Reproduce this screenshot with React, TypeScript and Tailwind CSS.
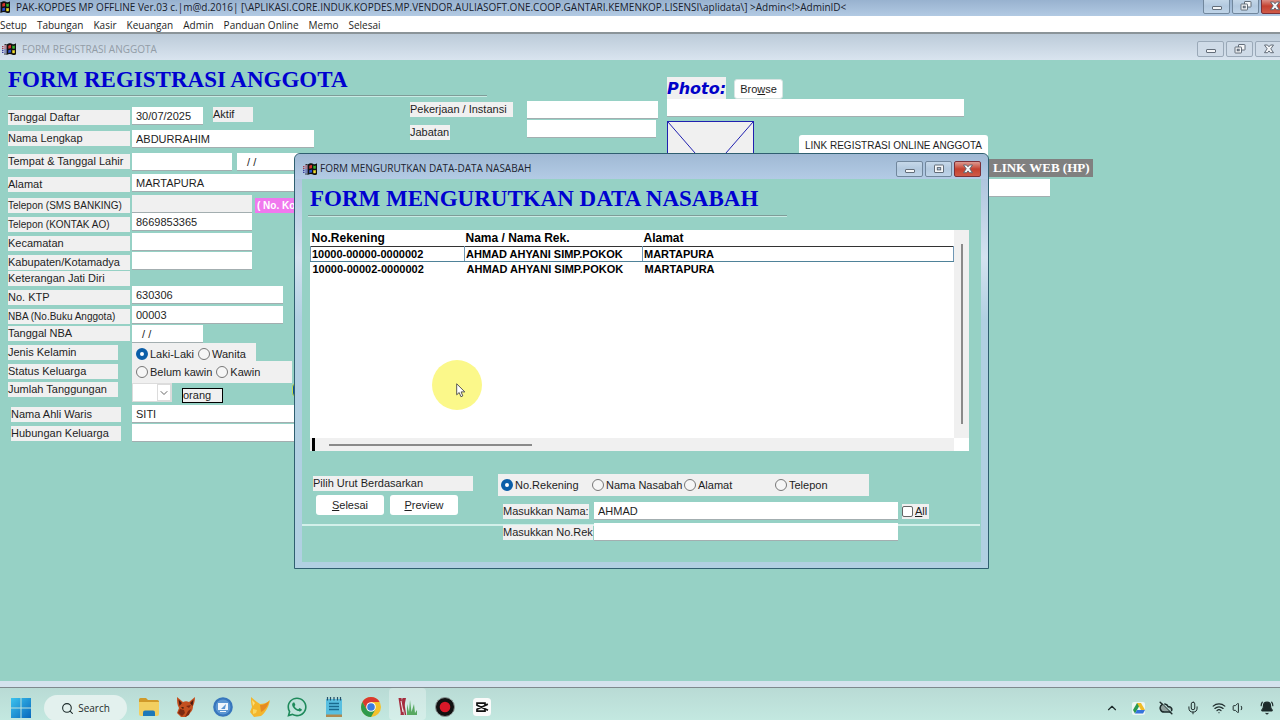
import type { ReactNode } from "react";
import {
  BellRing,
  ChevronDown,
  ChevronUp,
  CloudOff,
  Mic,
  Search,
  Volume1,
  Wifi,
} from "lucide-react";
import { FaWhatsapp } from "react-icons/fa";

const menus = ["Setup", "Tabungan", "Kasir", "Keuangan", "Admin", "Panduan Online", "Memo", "Selesai"];

const formLabels = [
  { id: "tanggal-daftar", text: "Tanggal Daftar", className: "mt-[9px] w-[122px] text-[11px]" },
  { id: "nama-lengkap", text: "Nama Lengkap", className: "mt-1.5 w-[122px] text-[11px]" },
  { id: "tempat-lahir", text: "Tempat & Tanggal Lahir", className: "mt-2 w-[122px] text-[11px]" },
  { id: "alamat", text: "Alamat", className: "mt-2 w-[122px] text-[11px]" },
  { id: "telepon-sms", text: "Telepon (SMS BANKING)", className: "mt-1.5 w-[122px] text-[10px]" },
  { id: "telepon-ao", text: "Telepon (KONTAK AO)", className: "mt-1 w-[122px] text-[10px]" },
  { id: "kecamatan", text: "Kecamatan", className: "mt-1 w-[122px] text-[11px]" },
  { id: "kabupaten", text: "Kabupaten/Kotamadya", className: "mt-1 w-[122px] text-[11px]" },
  { id: "no-ktp", text: "Keterangan Jati Diri", className: "mt-px w-[122px] text-[11px]" },
  { id: "no-ktp", text: "No. KTP", className: "mt-1 w-[122px] text-[11px]" },
  { id: "nba", text: "NBA (No.Buku Anggota)", className: "mt-1 w-[122px] text-[10px]" },
  { id: "tanggal-nba", text: "Tanggal NBA", className: "mt-0.5 w-[122px] text-[11px]" },
  { id: "laki", text: "Jenis Kelamin", className: "mt-1 w-[110px] text-[11px]" },
  { id: "belum-kawin", text: "Status Keluarga", className: "mt-1 w-[110px] text-[11px]" },
  { id: "tanggungan", text: "Jumlah Tanggungan", className: "mt-[3px] w-[110px] text-[11px]" },
  { id: "ahli-waris", text: "Nama Ahli Waris", className: "ml-[3px] mt-2.5 w-[110px] text-[11px]" },
  { id: "hubungan", text: "Hubungan Keluarga", className: "ml-[3px] mt-1 w-[110px] text-[11px]" },
];

const rows = [
  ["10000-00000-0000002", "AHMAD AHYANI SIMP.POKOK", "MARTAPURA"],
  ["10000-00002-0000002", "AHMAD AHYANI SIMP.POKOK", "MARTAPURA"],
];

function FlagIcon() {
  return (
    <svg viewBox="0 0 14 12" className="h-3 w-3.5 shrink-0" aria-hidden="true">
      <path d="M4.500 1.500C7 0 9 0 10 .8S12.500 1.500 14 .3V11.300c-1.500 1-3 1-4 .3S7 10.700 4.500 12Z" fill="#111" />
      <path d="M6.300 2.800C7.500 2 8.300 1.900 9 2.300V5.300C8.300 5 7.300 5.200 6.300 5.800Z" fill="#d6322c" />
      <path d="M10.300 2.500c.8.5 1.600.5 2.500.1v2.900c-.9.4-1.700.4-2.500 0Z" fill="#35b52b" />
      <path d="M6.300 7.300c1-.7 2-.8 2.700-.5v2.900C8.300 9.400 7.300 9.600 6.300 10.200Z" fill="#2a4fd4" />
      <path d="M10.300 7c.8.4 1.600.4 2.500 0v2.900c-.9.4-1.700.4-2.500 0Z" fill="#f0dc2c" />
      <path d="M0 3.500h1.500M2.200 3h2.300M0 5.300h1.500M2.200 5h2.300" stroke="#a83a4a" strokeWidth="1.200" />
      <path d="M0 7.300h1.500M2.200 7h2.300M0 9.300h1.500M2.200 9h2.300" stroke="#3b3f9a" strokeWidth="1.200" />
      <path d="M2 11h2.500M2.500 1.500h2" stroke="#222" strokeWidth=".9" />
    </svg>
  );
}

type Glyph = "min" | "restore" | "max" | "close";

function WindowButton({ glyph, tone }: { glyph: Glyph; tone: "active" | "dim" | "close" }) {
  const tones = {
    active: "border-[#71879d] bg-linear-to-b from-[#c6d8e9] via-[#b3c9df] to-[#bfd4e8]",
    dim: "border-[#9aa9b8] bg-[#cfdbe7]",
    close: "border-[#7c3038] bg-linear-to-b from-[#dc9a92] via-[#c4402f] to-[#cf5a48]",
  };
  return (
    <button
      type="button"
      aria-label={glyph}
      className={"flex h-4 w-[27px] items-center justify-center rounded-[2px] border " + tones[tone]}
    >
      <svg viewBox="0 0 12 10" className="h-2.5 w-3" fill="#f4f6f8" stroke="#56606c" strokeWidth=".9">
        {glyph === "min" && <rect x="1.500" y="5.500" width="9" height="3" rx=".5" />}
        {glyph === "max" && (
          <>
            <rect x="1.500" y="1" width="9" height="7.500" rx=".5" />
            <rect x="4.300" y="3.600" width="3.400" height="2.300" fill="#b3c9df" />
          </>
        )}
        {glyph === "restore" && (
          <>
            <rect x="4.500" y=".5" width="6.500" height="5.500" rx=".5" />
            <rect x="1" y="3" width="6.500" height="6" rx=".5" />
            <rect x="3.200" y="5.200" width="2" height="1.600" fill="#b3c9df" />
          </>
        )}
        {glyph === "close" && (
          <path d="M1.500 1h3L6 2.800 7.500 1h3L7.800 4.800 10.500 8.700h-3L6 6.900 4.500 8.700h-3l2.700-3.900Z" />
        )}
      </svg>
    </button>
  );
}

function Field({ id, label, value, className }: { id?: string; label?: string; value?: string; className: string }) {
  return (
    <input
      id={id}
      type="text"
      aria-label={label}
      defaultValue={value}
      className={"block h-[18px] border-b border-[#a3aeb0] px-1 text-[11px] leading-[17px] outline-none " + className}
    />
  );
}

function Radio({ id, name, label, checked }: { id: string; name: string; label: string; checked?: boolean }) {
  return (
    <span className="flex items-center gap-0.5">
      <input
        id={id}
        type="radio"
        name={name}
        defaultChecked={checked}
        className="size-3 shrink-0 appearance-none rounded-full border border-[#777] bg-[#f6f6f6] checked:border-4 checked:border-[#0b5ea8] checked:bg-white"
      />
      <label htmlFor={id} className="whitespace-nowrap">{label}</label>
    </span>
  );
}

function Rule({ className }: { className: string }) {
  return <div className={"h-0.5 border-t border-b border-t-[#7f9c98] border-b-[#c9ebe4] " + className} />;
}

function MemberForm() {
  return (
    <div className="grid grid-cols-[402px_257px_1fr] grid-rows-[41px_auto] pl-2">
      <div className="col-span-2 pt-2">
        <h1 className="font-['Liberation_Serif',serif] text-[23px] leading-6 font-bold text-[#0000d0]">FORM REGISTRASI ANGGOTA</h1>
        <Rule className="mt-[3px] w-[479px]" />
      </div>

      <div className="col-start-1 row-start-2 flex">
        <div className="w-[124px]">
          {formLabels.map((l) => (
            <label
              key={l.text}
              htmlFor={l.id}
              className={"block h-[15px] bg-[#f0f0f0] leading-[15px] whitespace-nowrap " + l.className}
            >
              {l.text}
            </label>
          ))}
        </div>
        <div className="mt-1.5">
          <div className="flex items-start gap-[10px]">
            <Field id="tanggal-daftar" value="30/07/2025" className="w-[71px] bg-white" />
            <span className="h-[15px] w-10 bg-[#f0f0f0] leading-[15px]">Aktif</span>
          </div>
          <Field id="nama-lengkap" value="ABDURRAHIM" className="mt-[5px] w-[182px] bg-white" />
          <div className="mt-[5px] flex gap-[5px]">
            <Field id="tempat-lahir" className="w-[100px] bg-white" />
            <Field label="Tanggal Lahir" value="  / /" className="w-[100px] bg-white" />
          </div>
          <Field id="alamat" value="MARTAPURA" className="mt-[3px] w-[270px] bg-white" />
          <div className="mt-[3px] flex items-end gap-[3px]">
            <Field id="telepon-sms" className="w-[120px] bg-[#f0f0f0]" />
            <span className="h-[15px] bg-[#f078ee] px-0.5 text-[10px] leading-[15px] font-bold whitespace-nowrap text-white">( No. Kon</span>
          </div>
          <Field id="telepon-ao" value="8669853365" className="w-[120px] bg-white" />
          <Field id="kecamatan" className="mt-[2px] w-[120px] bg-white" />
          <Field id="kabupaten" className="mt-px w-[120px] bg-white" />
          <Field id="no-ktp" value="630306" className="mt-4 w-[151px] bg-white" />
          <Field id="nba" value="00003" className="mt-[2px] w-[151px] bg-white" />
          <Field id="tanggal-nba" value="  / /" className="mt-px w-[71px] bg-white" />
          <div className="flex h-[18px] w-[124px] items-center gap-1 bg-[#f0f0f0] pt-1 pl-1">
            <Radio id="laki" name="kelamin" label="Laki-Laki" checked />
            <Radio id="wanita" name="kelamin" label="Wanita" />
          </div>
          <div className="flex h-[22px] w-40 items-center gap-1 bg-[#f0f0f0] pl-1">
            <Radio id="belum-kawin" name="status" label="Belum kawin" />
            <Radio id="kawin" name="status" label="Kawin" />
          </div>
          <div className="flex h-[22px] items-start">
            <div className="relative">
              <select id="tanggungan" className="block h-[19px] w-10 appearance-none border border-[#dcdcdc] bg-white">
                <option> </option>
              </select>
              <span className="pointer-events-none absolute top-px right-px flex h-[17px] w-[14px] items-center justify-center border border-[#dcdcdc] bg-white">
                <ChevronDown className="size-3 text-[#666]" />
              </span>
            </div>
            <span className="mt-[5px] ml-2.5 h-[15px] w-[41px] border border-black bg-[#f0f0f0] leading-[13px]">orang</span>
            <button type="button" aria-label="Cari" className="ml-[69px] h-3.5 w-4 rounded-sm border border-[#c8e04a] bg-[#0b4f9c]" />
          </div>
          <Field id="ahli-waris" value="SITI" className="w-[270px] bg-white" />
          <Field id="hubungan" className="mt-px w-[270px] bg-white" />
        </div>
      </div>

      <div className="row-start-2 flex gap-3.5">
        <div>
          <label htmlFor="pekerjaan" className="mt-px block h-[15px] w-[103px] bg-[#f0f0f0] leading-[15px]">Pekerjaan / Instansi</label>
          <label htmlFor="jabatan" className="mt-2 block h-[15px] w-10 bg-[#f0f0f0] leading-[15px]">Jabatan</label>
        </div>
        <div>
          <Field id="pekerjaan" className="w-[131px] bg-white" />
          <Field id="jabatan" className="mt-px w-[129px] bg-white" />
        </div>
      </div>

      <div className="col-start-3 row-span-2 row-start-1 pt-[17px]">
        <div className="flex items-end gap-2">
          <label htmlFor="photo" className="h-[22px] w-[59px] bg-[#f0f0f0] font-['DejaVu_Sans',sans-serif] text-base leading-6 font-bold text-[#0000c8] italic">Photo:</label>
          <button type="button" className="h-5 w-[49px] rounded-[3px] border border-[#d8e4e2] bg-white">
            Bro<u>w</u>se
          </button>
        </div>
        <Field id="photo" className="w-[297px] bg-white" />
        <div className="flex">
          <svg viewBox="0 0 87 80" className="mt-1 h-20 w-[87px]" fill="#f0f0f0" stroke="#2020b0">
            <rect x=".5" y=".5" width="86" height="79" />
            <path d="M1 1l68 78M86 1L18 79" />
          </svg>
          <div className="mt-[18px] ml-[45px]">
            <button type="button" className="block h-6 w-[189px] rounded-[3px] bg-white pb-1 text-[10px] whitespace-nowrap">LINK REGISTRASI ONLINE ANGGOTA</button>
            <div className="ml-[189px] h-[18px] w-[105px] bg-[#808080] pl-[5px] font-['Liberation_Serif',serif] text-[13px] leading-[17px] font-bold whitespace-nowrap text-white">LINK WEB (HP)</div>
            <Field label="Link Web" className="mt-[2px] w-[251px] bg-white" />
          </div>
        </div>
      </div>
    </div>
  );
}

function SortDialog() {
  return (
    <div
      role="dialog"
      aria-label="FORM MENGURUTKAN DATA-DATA NASABAH"
      className="absolute top-[93px] left-[294px] w-[695px] rounded-t-md border border-[#2f5f70] bg-linear-to-b from-[#a3bdd8] via-[#d4e2f0] via-25% to-[#b1d0e2] to-40% px-[7px] pb-1.5"
    >
      <div className="-mx-[7px] flex h-[25px] items-center gap-[3px] rounded-t-md bg-linear-to-b from-[#a0b9d4] to-[#b3cbe5] pt-1 pr-[7px] pl-2 font-['Open_Sans',sans-serif] text-[10px] text-[#1c2430]">
        <FlagIcon />
        <span className="flex-1">FORM MENGURUTKAN DATA-DATA NASABAH</span>
        <div className="flex gap-0.5">
          <WindowButton glyph="min" tone="active" />
          <WindowButton glyph="max" tone="active" />
          <WindowButton glyph="close" tone="close" />
        </div>
      </div>

      <div className="relative bg-[#96d1c5] pt-2 pb-[21px]">
        <h2 className="pl-2 font-['Liberation_Serif',serif] text-[23px] leading-6 font-bold text-[#0000d0]">FORM MENGURUTKAN DATA NASABAH</h2>
        <Rule className="mt-1 ml-1.5 w-[479px]" />

        <div className="relative mt-[13px] ml-2 grid w-[659px] grid-cols-[1fr_15px] grid-rows-[208px_13px] bg-white">
          <div>
            <table className="w-full table-fixed border-collapse text-left text-[11px] font-bold text-black">
              <colgroup>
                <col className="w-[154px]" />
                <col className="w-[178px]" />
                <col />
              </colgroup>
              <thead>
                <tr className="h-4 text-[12px] leading-4">
                  <th className="pl-px">No.Rekening</th>
                  <th className="pl-px">Nama / Nama Rek.</th>
                  <th className="pl-px">Alamat</th>
                </tr>
              </thead>
              <tbody>
                {rows.map((row, i) => (
                  <tr key={row[0]} className="h-[15px] leading-[14px]">
                    {row.map((cell) => (
                      <td key={cell} className={i === 0 ? "border border-t-[#333] border-r-[#6f97b5] border-b-[#4f8299] border-l-[#6f97b5] pl-px" : "pl-0.5"}>
                        {cell}
                      </td>
                    ))}
                  </tr>
                ))}
              </tbody>
            </table>
          </div>
          <div className="flex justify-center bg-[#f0f0f0] pt-3.5 pb-3.5">
            <div className="w-0.5 bg-[#8a8a8a]" />
          </div>
          <div className="flex items-center bg-[#f0f0f0]">
            <div className="ml-0.5 h-full w-[3px] bg-black" />
            <div className="ml-3.5 h-0.5 w-[203px] bg-[#8a8a8a]" />
          </div>
          <div className="absolute top-[130px] left-[122px] size-[50px] rounded-full bg-[#fbf88a]" />
          <svg viewBox="0 0 10 15" className="absolute top-[153px] left-[146px] h-[15px] w-2.5" fill="#fff" stroke="#444" strokeWidth=".9">
            <path d="M.7.8v11l2.500-2.300 1.700 4.200 1.900-.8L5.100 8.900h3.700Z" />
          </svg>
        </div>

        <div className="absolute right-px bottom-9 left-0 h-0.5 bg-[#d3f0ea]" />

        <div className="relative mt-[23px] flex gap-[25px] pl-[11px]">
          <div className="w-40 pt-0.5">
            <div className="h-[15px] bg-[#f0f0f0] leading-[14px]">Pilih Urut Berdasarkan</div>
            <div className="mt-1 ml-[3px] flex gap-1.5">
              <button type="button" className="h-5 w-[68px] rounded-[3px] bg-white"><u>S</u>elesai</button>
              <button type="button" className="h-5 w-[68px] rounded-[3px] bg-white"><u>P</u>review</button>
            </div>
          </div>
          <div>
            <div className="grid h-[22px] w-[371px] grid-cols-[91px_92px_91px_1fr] bg-[#f0f0f0] pl-[3px]">
              <Radio id="by-rekening" name="urut" label="No.Rekening" checked />
              <Radio id="by-nama" name="urut" label="Nama Nasabah" />
              <Radio id="by-alamat" name="urut" label="Alamat" />
              <Radio id="by-telepon" name="urut" label="Telepon" />
            </div>
            <div className="mt-1.5 flex items-center pl-[5px]">
              <div className="w-[91px]">
                <label htmlFor="cari-nama" className="block h-[15px] w-[86px] bg-[#f0f0f0] leading-[15px] whitespace-nowrap">Masukkan Nama:</label>
              </div>
              <Field id="cari-nama" value="AHMAD" className="w-[304px] bg-white" />
              <span className="ml-1 flex h-[15px] items-center gap-0.5 bg-[#f0f0f0]">
                <input id="all" type="checkbox" className="size-[11px] appearance-none rounded-[2px] border border-[#666] bg-white" />
                <label htmlFor="all" className="pr-0.5"><u>A</u>ll</label>
              </span>
            </div>
            <div className="mt-[3px] flex items-center pl-[5px]">
              <div className="w-[91px]">
                <label htmlFor="cari-rek" className="block h-[15px] w-[90px] bg-[#f0f0f0] leading-[15px] whitespace-nowrap">Masukkan No.Rek</label>
              </div>
              <Field id="cari-rek" className="w-[304px] bg-white" />
            </div>
          </div>
        </div>
      </div>
    </div>
  );
}

function Fox({ body, dark, ear }: { body: string; dark: string; ear: string }) {
  return (
    <svg viewBox="0 0 20 20" className="size-5">
      <path d="M1 0l6 5c2-1 4-1 6 0l6-5c0 4-1 7-2 9 0 3-1 5-3 7l-4 4H5L1 16l2-5C1 8 1 4 1 0Z" fill={body} />
      <path d="M2.500 2.500L6 6 3.500 9ZM17.500 2.500L14 6l2.500 3Z" fill={ear} />
      <path d="M4 12l4 1 1 3-3 3-4-3ZM10 9l5-1-2 3ZM12 14l3-2-2 6-4 2Z" fill={dark} />
      <path d="M5 10l3 .5-1 1.500Z" fill="#2b1408" />
    </svg>
  );
}

function TaskIcon({ children, label, active }: { children: ReactNode; label: string; active?: boolean }) {
  return (
    <button
      type="button"
      aria-label={label}
      className={"flex h-8 w-[37px] items-center justify-center pt-1.5 " + (active ? "rounded bg-white/30" : "")}
    >
      {children}
    </button>
  );
}

function Taskbar() {
  return (
    <footer className="flex h-8 items-center overflow-hidden bg-linear-to-b from-[#b9dbd5] to-[#c3e8e0] font-['Open_Sans',sans-serif] text-[#1d2b2b]">
      <button type="button" aria-label="Start" className="ml-[11px] pt-2">
        <svg viewBox="0 0 20 20" className="size-5">
          <defs>
            <linearGradient id="start" x1="0" y1="0" x2="1" y2="1">
              <stop offset="0" stopColor="#3cc3ee" />
              <stop offset="1" stopColor="#0868bd" />
            </linearGradient>
          </defs>
          <path d="M0 0h9.500v9.500H0ZM10.500 0H20v9.500h-9.500ZM0 10.500h9.500V20H0ZM10.500 10.500H20V20h-9.500Z" fill="url(#start)" />
        </svg>
      </button>
      <button type="button" className="mt-2 ml-[13px] flex h-[26px] w-[83px] items-center justify-center gap-1 rounded-full bg-[#e3f1ee] text-[10px]">
        <Search className="size-[13px]" />
        Search
      </button>
      <div className="ml-[3px] flex">
        <TaskIcon label="File Explorer">
          <svg viewBox="0 0 20 18" className="h-[18px] w-5">
            <path d="M0 1.500Q0 0 1.500 0H7l2 2h9.500Q20 2 20 3.500V9H0Z" fill="#d09a2a" />
            <path d="M0 4h20v12q0 2-2 2H2q-2 0-2-2Z" fill="#f2cf60" />
            <path d="M4 18v-3.500Q4 12.500 6 12.500h8q2 0 2 2V18Z" fill="#1d78b8" />
          </svg>
        </TaskIcon>
        <TaskIcon label="Visual FoxPro"><Fox body="#c4501f" dark="#7d2a12" ear="#4b1b10" /></TaskIcon>
        <TaskIcon label="Remote">
          <svg viewBox="0 0 20 20" className="size-5">
            <circle cx="10" cy="10" r="9.800" fill="#3776bd" />
            <circle cx="10" cy="10" r="7.500" fill="#5b96d2" />
            <path d="M5 6h10v7H5Z" fill="#f0f6fc" />
            <path d="M8 12l5-5-1 5Z" fill="#5b96d2" />
            <path d="M7 14.500h6" stroke="#f0f6fc" />
          </svg>
        </TaskIcon>
        <TaskIcon label="FoxPro 9">
          <svg viewBox="0 0 20 20" className="size-5">
            <path d="M1 0l6 5 3 2c3 0 7-1 10-4-1 6-4 12-9 16l-7 1-4-5 2-5C1 7 1 3 1 0Z" fill="#f3b62c" />
            <path d="M10 8c4 0 7-2 9-4-1 5-4 9-8 11Z" fill="#e58a22" />
            <path d="M2 3l3 3-2 3Z" fill="#fbe07b" />
            <path d="M3 12l4 1-1 3-3 1Z" fill="#fad65e" />
          </svg>
        </TaskIcon>
        <TaskIcon label="WhatsApp"><FaWhatsapp className="size-[22px] text-[#1e8a5b]" /></TaskIcon>
        <TaskIcon label="Notepad">
          <svg viewBox="0 0 16 20" className="h-5 w-4">
            <path d="M0 2h16v16H0Z" fill="#58bfe0" />
            <path d="M0 17.500h16V20H0Z" fill="#b08a50" />
            <path d="M1.500 0v3.500M4.500 0v3.500M8 0v3.500M11.500 0v3.500M14.500 0v3.500" stroke="#27506a" strokeWidth="1.200" />
            <path d="M3 6.500h10M3 9.500h10M3 12.500h10" stroke="#186a8e" strokeWidth="1.300" />
          </svg>
        </TaskIcon>
        <TaskIcon label="Chrome">
          <svg viewBox="0 0 20 20" className="size-5">
            <circle cx="10" cy="10" r="10" fill="#f4c12c" />
            <path d="M1.340 5A10 10 0 0 1 18.660 5H10L5.700 12.500Z" fill="#d93a30" />
            <path d="M1.340 5A10 10 0 0 0 10 20l4.330-7.500H5.700Z" fill="#2f9a4c" />
            <circle cx="10" cy="10" r="4.800" fill="#fff" />
            <circle cx="10" cy="10" r="3.800" fill="#3a7be0" />
          </svg>
        </TaskIcon>
        <TaskIcon label="Koperasi" active>
          <svg viewBox="0 0 20 18" className="h-[18px] w-5" fill="none">
            <path d="M.5 0h3L6 17H3ZM4.500 0H8L4.500 17H2.500Z" fill="#a52c3e" />
            <path d="M5 1l2.500 16" stroke="#a52c3e" strokeWidth="1.500" />
            <path d="M3 3l2 11" stroke="#f2f2f2" />
            <path d="M9 17V6l2 8 1-12 1.500 12L16 6l1 9 2-3v5Z" fill="#58a860" />
          </svg>
        </TaskIcon>
        <TaskIcon label="Recorder">
          <svg viewBox="0 0 20 20" className="size-5">
            <circle cx="10" cy="10" r="9.500" fill="#111" stroke="#8b9694" />
            <circle cx="10" cy="10" r="5.300" fill="#d81828" />
          </svg>
        </TaskIcon>
        <TaskIcon label="CapCut">
          <svg viewBox="0 0 18 18" className="size-[18px]">
            <rect width="18" height="18" rx="3.500" fill="#fafafa" />
            <path d="M14.800 6L12 7.500V5.200H4v2l11 5M14.800 6.200L4 11.200v2h8V11" fill="none" stroke="#111" strokeWidth="1.700" />
          </svg>
        </TaskIcon>
      </div>
      <div className="mr-1.5 ml-auto flex items-center pt-2">
        <ChevronUp className="mr-[13px] size-3.5" />
        <span className="mr-[14px] flex size-[13px] items-center justify-center rounded-[2px] bg-[#edf6f3]">
          <svg viewBox="0 0 12 11" className="h-[11px] w-3">
            <path d="M4 0h4L4 7 2 10.500 0 7Z" fill="#2a9a50" />
            <path d="M4 0h4l4 7H8Z" fill="#f0bc28" />
            <path d="M4 7h8l-2 3.500H2Z" fill="#3573dc" />
          </svg>
        </span>
        <CloudOff className="mr-[13px] size-3.5 fill-[#8fa09d]" strokeWidth={2.5} />
        <Mic className="mr-3 size-3.5" strokeWidth={1.7} />
        <Wifi className="mr-1.5 size-3.5" />
        <Volume1 className="mr-3.5 size-3.5" strokeWidth={1.7} />
        <BellRing className="size-3.5 fill-current" />
      </div>
    </footer>
  );
}

export default function App() {
  return (
    <div className="flex min-h-screen flex-col overflow-hidden bg-[#96d1c5] font-['Liberation_Sans',Arial,sans-serif] text-[11px] text-[#1e1e1e]">
      <header className="flex h-4 items-start gap-0.5 bg-linear-to-b from-[#98b2cf] to-[#b2cae3] font-['Open_Sans',sans-serif] text-[10px] leading-[14px] text-[#17202c]">
        <div className="-ml-1 pt-px"><FlagIcon /></div>
        <span className="ml-1 flex-1 whitespace-nowrap">
          PAK-KOPDES MP OFFLINE Ver.03 c.|m@d.2016| [\APLIKASI.CORE.INDUK.KOPDES.MP.VENDOR.AULIASOFT.ONE.COOP.GANTARI.KEMENKOP.LISENSI\aplidata\] &gt;Admin&lt;!&gt;AdminID&lt;
        </span>
        <div className="-mt-0.5 -mr-2 flex gap-0.5">
          <WindowButton glyph="min" tone="active" />
          <WindowButton glyph="restore" tone="active" />
          <WindowButton glyph="close" tone="close" />
        </div>
      </header>

      <nav className="flex h-[18px] gap-2.5 border-b-2 border-[#8b9499] bg-white font-['Open_Sans',sans-serif] text-[10px]">
        {menus.map((m) => (
          <button key={m} type="button" className="leading-[18px] whitespace-nowrap">{m}</button>
        ))}
      </nav>

      <div className="flex h-[26px] items-center gap-1.5 bg-linear-to-b from-[#bccbd9] to-[#d9e4ef] pt-1 pl-0.5 font-['Open_Sans',sans-serif] text-[10px] text-[#929ca6]">
        <FlagIcon />
        <span className="flex-1">FORM REGISTRASI ANGGOTA</span>
        <div className="-mr-0.5 flex gap-0.5">
          <WindowButton glyph="min" tone="dim" />
          <WindowButton glyph="restore" tone="dim" />
          <WindowButton glyph="close" tone="dim" />
        </div>
      </div>

      <main className="relative flex-1">
        <MemberForm />
        <SortDialog />
      </main>

      <div className="h-[7px] border-b border-[#7f8a8e] bg-[#d5e3ee]" />
      <Taskbar />
    </div>
  );
}
